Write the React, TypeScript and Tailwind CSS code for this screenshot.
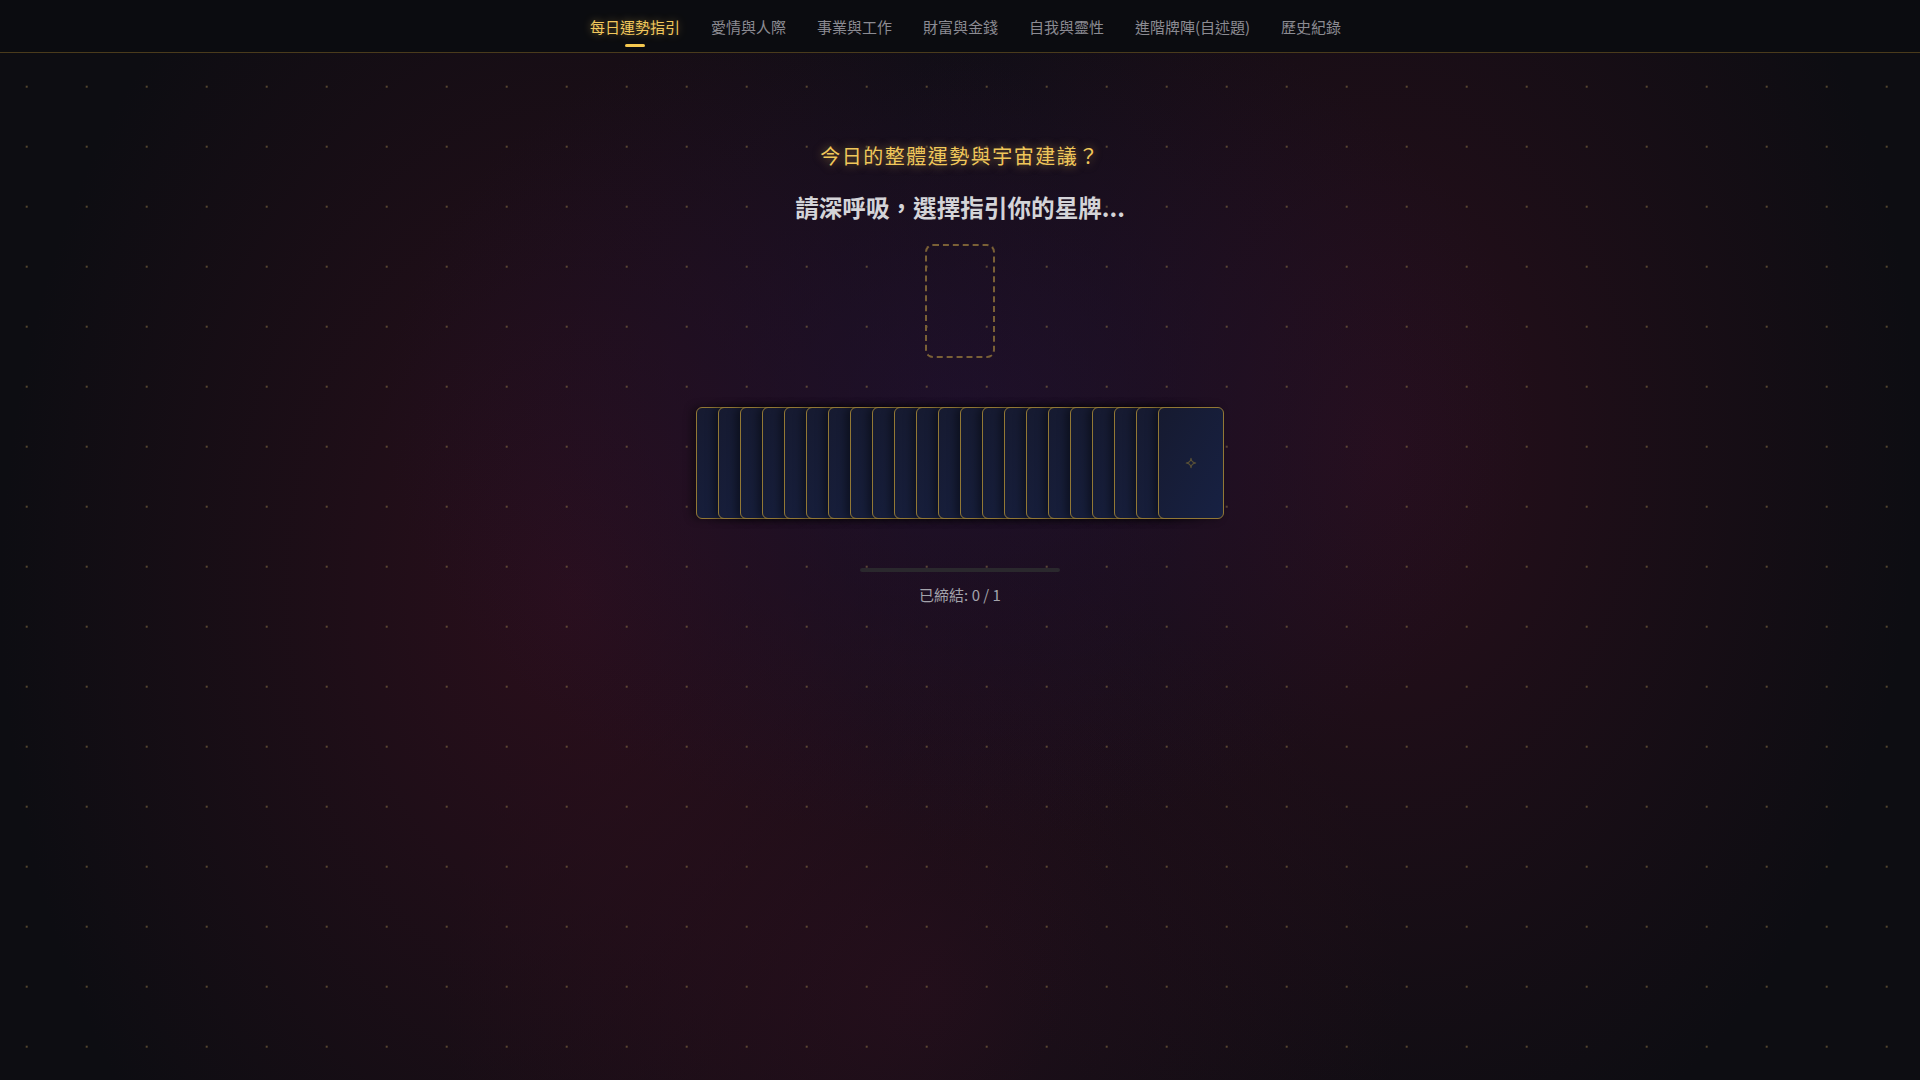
import { useState } from "react";

const tabs = ["每日運勢指引", "愛情與人際", "事業與工作", "財富與金錢", "自我與靈性", "進階牌陣(自述題)", "歷史紀錄"];

const deck = Array.from({ length: 22 }, (_, i) => i);

function StarMark() {
  return (
    <svg width="12" height="12" viewBox="0 0 24 24" fill="none">
      <path
        d="M12 2.5C12.6 9 15 11.4 21.5 12C15 12.6 12.6 15 12 21.5C11.4 15 9 12.6 2.5 12C9 11.4 11.4 9 12 2.5Z"
        stroke="#5b5236"
        strokeWidth="2.2"
        strokeLinejoin="round"
      />
    </svg>
  );
}

export default function App() {
  const [active, setActive] = useState(0);
  const drawn = 0;
  const total = 1;

  return (
    <div className="relative h-screen min-h-screen overflow-hidden bg-[#0d0d12] font-['Noto_Sans_CJK_TC','Noto_Sans',sans-serif]">
      {/* glow layers */}
      <div className="pointer-events-none absolute inset-0 bg-[radial-gradient(ellipse_30%_40%_at_50%_38%,rgba(32,17,50,0.7),transparent),radial-gradient(ellipse_30%_75%_at_30%_55%,rgba(50,15,30,0.8),transparent),radial-gradient(ellipse_28%_70%_at_72%_42%,rgba(48,15,30,0.75),transparent),radial-gradient(ellipse_25%_40%_at_48%_92%,rgba(44,16,32,0.6),transparent)]" />
      {/* star dots */}
      <div className="pointer-events-none absolute inset-0 bg-[radial-gradient(circle,rgba(150,125,72,0.5)_0.9px,transparent_1.5px)] bg-[size:60px_60px] bg-[position:-3.3px_-3.3px]" />

      <header className="relative z-10 h-[53px] border-b border-[#4a3b1c] bg-[#0b0c10]">
        <nav className="flex justify-center gap-[31px] pl-[11px]">
          {tabs.map((t, i) => (
            <button
              key={t}
              onClick={() => setActive(i)}
              className="flex flex-col items-center pt-[17px]"
            >
              <span
                className={
                  i === active
                    ? "text-[15px] leading-5 text-[#f2c85c] [text-shadow:0_0_8px_rgba(242,200,92,0.45)]"
                    : "text-[15px] leading-5 text-[#8b8b92]"
                }
              >
                {t}
              </span>
              {i === active && <span className="mt-[7px] h-[2.5px] w-5 rounded-full bg-[#f5c84f]" />}
            </button>
          ))}
        </nav>
      </header>

      <main className="relative z-10 flex flex-col items-center pt-[89px]">
        <h2 className="text-xl leading-7 tracking-[0.075em] text-[#f0c75a] [text-shadow:0_0_10px_rgba(240,199,90,0.5)]">
          今日的整體運勢與宇宙建議？
        </h2>
        <p className="mt-[21px] text-[23.6px] leading-8 font-bold text-[#d4d4d8]">請深呼吸，選擇指引你的星牌...</p>

        <div className="mt-[21px] h-[114px] w-[70px] rounded-lg border-2 border-dashed border-[#7a6036]" />

        <div className="mt-[49px] flex">
          {deck.map((i) => (
            <div
              key={i}
              className={
                "flex h-[112px] w-[66px] shrink-0 items-center justify-center rounded-md border border-[#927835] bg-gradient-to-br from-[#161a30] to-[#172143] shadow-[-4px_0_8px_rgba(0,0,0,0.45)] " +
                (i === 0 ? "" : "-ml-[44px]")
              }
            >
              {i === deck.length - 1 && <StarMark />}
            </div>
          ))}
        </div>

        <div className="mt-[49px] h-1 w-[200px] overflow-hidden rounded-full bg-[#2a282d]">
          <div className="h-full bg-[#f0c75a]" style={{ width: `${(drawn / total) * 100}%` }} />
        </div>
        <p className="mt-3 text-[15px] leading-[22px] text-[#a3a3ab]">
          已締結: {drawn} / {total}
        </p>
      </main>
    </div>
  );
}
